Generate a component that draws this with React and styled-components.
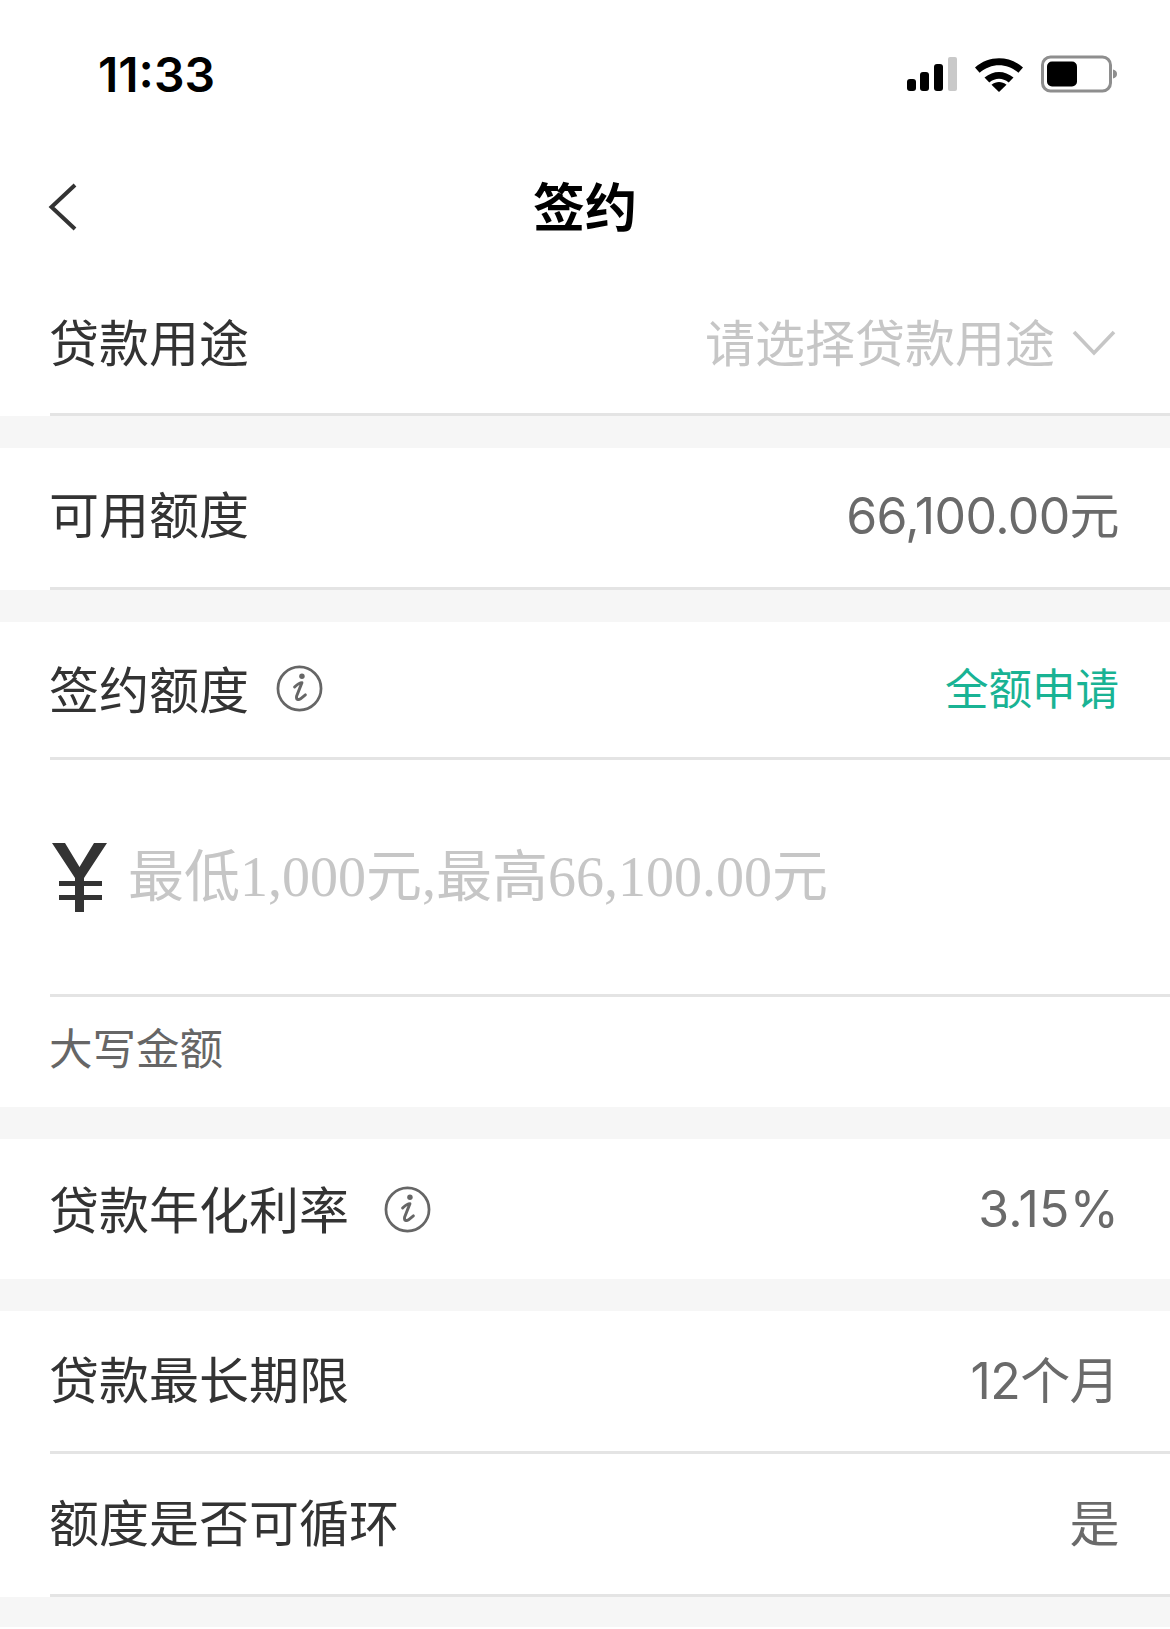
import React from "react";
import styled, { createGlobalStyle } from "styled-components";

const CJK = `"Noto Sans CJK SC", "Noto Sans", sans-serif`;
const Global = createGlobalStyle`
  html, body { margin: 0; padding: 0; background: #fff; }
  body { font-family: ${CJK}; }
`;
const Page = styled.div`
  width: 1170px; height: 1629px; background: #f6f6f6; overflow: hidden;
  display: flex; flex-direction: column;
`;
const StatusBar = styled.div`
  height: 148px; background: #fff; box-sizing: border-box;
  padding: 47px 53px 0 98px;
  display: flex; justify-content: space-between; align-items: flex-start;
`;
const Clock = styled.div`
  font: 600 48px/56px "Inter", "Liberation Sans", sans-serif; color: #000;
`;
const StatusIcons = styled.div`
  display: flex; align-items: center; gap: 17px; height: 54px;
`;
const NavBar = styled.div`
  height: 118px; background: #fff; position: relative;
  display: flex; align-items: center; justify-content: center;
  padding-bottom: 4px; box-sizing: border-box;
`;
const BackIcon = styled.svg`
  position: absolute; left: 47px; top: 35px;
`;
const Title = styled.h1`
  margin: 0; font: 700 52px/60px ${CJK}; color: #000;
`;
const Section = styled.section`
  background: #fff; margin-bottom: ${(p) => p.$gap ?? 32}px;
`;
const Row = styled.div`
  height: ${(p) => p.$h}px; box-sizing: border-box; margin-left: 50px;
  padding: 0 51px ${(p) => p.$pb ?? 0}px 0;
  display: flex; align-items: center; justify-content: space-between;
  border-bottom: ${(p) => (p.$noLine ? "none" : "3px solid #e4e4e4")};
`;
const LabelWrap = styled.div`
  display: flex; align-items: center; gap: ${(p) => p.$gap ?? 27}px;
`;
const Label = styled.span`
  font: 400 50px/60px ${CJK}; color: #333; margin-left: -1px;
`;
const Value = styled.span`
  font: 400 50px/60px "Inter", ${CJK}; color: #6a6a6a;
  letter-spacing: ${(p) => p.$ls ?? -0.6}px;
  margin-top: ${(p) => p.$mt ?? 0}px;
`;
const Placeholder = styled.span`
  font: 400 50px/60px ${CJK}; color: #c6c6c6;
`;
const SelectWrap = styled.div`
  display: flex; align-items: center; gap: 17px; margin-right: 3px;
`;
const Chevron = styled.svg`
  margin-top: 6px;
`;
const Action = styled.span`
  font: 400 43.500px/56px ${CJK}; color: #19b394;
`;
const AmountRow = styled.div`
  height: 237px; margin-left: 50px; box-sizing: border-box; padding: 0 0 0 2px;
  display: flex; align-items: center; gap: 21px;
  border-bottom: 3px solid #e4e4e4;
`;
const AmountHint = styled.span`
  font: 400 56px/60px "Liberation Serif", ${CJK}; color: #c6c6c6;
`;
const Caps = styled.div`
  height: 110px; margin-left: 49px; box-sizing: border-box; padding-bottom: 10px;
  display: flex; align-items: center;
  font: 400 43.500px/54px ${CJK}; color: #666;
`;
const InfoIcon = styled.svg`
  margin-top: ${(p) => p.$mt ?? 0}px;
`;
const BottomEdge = styled.div`
  margin-top: auto; height: 2px; background: #fff;
`;

const Info = ({ $mt }) => (
  <InfoIcon $mt={$mt} width="47" height="47" viewBox="0 0 48 48">
    <circle cx="24" cy="24" r="22" fill="none" stroke="#666" strokeWidth="2.800" />
    <circle cx="26.500" cy="11.500" r="2.800" fill="#666" />
    <path d="M19 22.500C22 19.500 24 18 26.500 18L21 32C20.500 35.500 23 36 25 34.500L30 30.500" fill="none" stroke="#666" strokeWidth="3" strokeLinecap="round" strokeLinejoin="round" />
  </InfoIcon>
);
const Signal = () => (
  <svg width="52" height="36" viewBox="0 0 52 36">
    <rect x="2" y="23" width="9" height="12" rx="3" fill="#000" />
    <rect x="15" y="16" width="9" height="19" rx="3" fill="#000" />
    <rect x="29" y="8" width="9" height="27" rx="3" fill="#000" />
    <rect x="43" y="1" width="9" height="34" rx="2" fill="#c9c9c9" />
  </svg>
);
const Wifi = () => (
  <svg width="50" height="36" viewBox="0 0 50 36">
    <path d="M1 11.500C15-.8 35-.8 49 11.500l-4.600 5.200C32.800 6.600 17.200 6.600 5.600 16.700Z" fill="#000" />
    <path d="M10.500 21.500c8.800-7.500 20.200-7.500 29 0l-4.800 5C28.500 21.500 21.500 21.500 15.300 26.500Z" fill="#000" />
    <path d="M25 36l-7.500-7.200c4.500-3.600 10.500-3.600 15 0Z" fill="#000" />
  </svg>
);
const Battery = () => (
  <svg width="76" height="38" viewBox="0 0 76 38">
    <rect x="1.500" y="2" width="68" height="34" rx="8" fill="none" stroke="#8e8e8e" strokeWidth="3" />
    <rect x="6" y="6.500" width="30" height="25" rx="5" fill="#000" />
    <path d="M72 14.500c3 .8 4 2.500 4 4.500s-1 3.700-4 4.500Z" fill="#8e8e8e" />
  </svg>
);

export default function App() {
  return (
    <Page>
      <Global />
      <StatusBar>
        <Clock>11:33</Clock>
        <StatusIcons>
          <Signal />
          <Wifi />
          <Battery />
        </StatusIcons>
      </StatusBar>
      <NavBar>
        <BackIcon width="32" height="48" viewBox="0 0 32 48">
          <path d="M28 2 4.500 24 28 46" fill="none" stroke="#333" strokeWidth="4" />
        </BackIcon>
        <Title>签约</Title>
      </NavBar>
      <Section>
        <Row $h={150}>
          <Label>贷款用途</Label>
          <SelectWrap>
            <Placeholder>请选择贷款用途</Placeholder>
            <Chevron width="44" height="26" viewBox="0 0 44 26">
              <path d="M2 2l20 21L42 2" fill="none" stroke="#c6c6c6" strokeWidth="3.600" />
            </Chevron>
          </SelectWrap>
        </Row>
      </Section>
      <Section>
        <Row $h={142} $pb={12}>
          <Label>可用额度</Label>
          <Value $mt={8}>66,100.00元</Value>
        </Row>
      </Section>
      <Section>
        <Row $h={138} $pb={6}>
          <LabelWrap>
            <Label>签约额度</Label>
            <Info $mt={4} />
          </LabelWrap>
          <Action>全额申请</Action>
        </Row>
        <AmountRow>
          <svg width="55" height="69" viewBox="0 0 55 69">
            <path d="M0 0h13l14.500 24L42 0h13L32 35v34h-9V35Z M7 38h43v5H7Z M7 52h43v5H7Z" fill="#333" />
          </svg>
          <AmountHint>最低1,000元,最高66,100.00元</AmountHint>
        </AmountRow>
        <Caps>大写金额</Caps>
      </Section>
      <Section>
        <Row $h={140} $noLine $pb={4}>
          <LabelWrap $gap={35}>
            <Label>贷款年化利率</Label>
            <Info $mt={4} />
          </LabelWrap>
          <Value $mt={4} $ls={0.2}>3.15%</Value>
        </Row>
      </Section>
      <Section $gap={0}>
        <Row $h={143} $pb={8}>
          <Label>贷款最长期限</Label>
          <Value $mt={8}>12个月</Value>
        </Row>
        <Row $h={143} $pb={8}>
          <Label>额度是否可循环</Label>
          <Value $mt={8}>是</Value>
        </Row>
      </Section>
      <BottomEdge />
    </Page>
  );
}
